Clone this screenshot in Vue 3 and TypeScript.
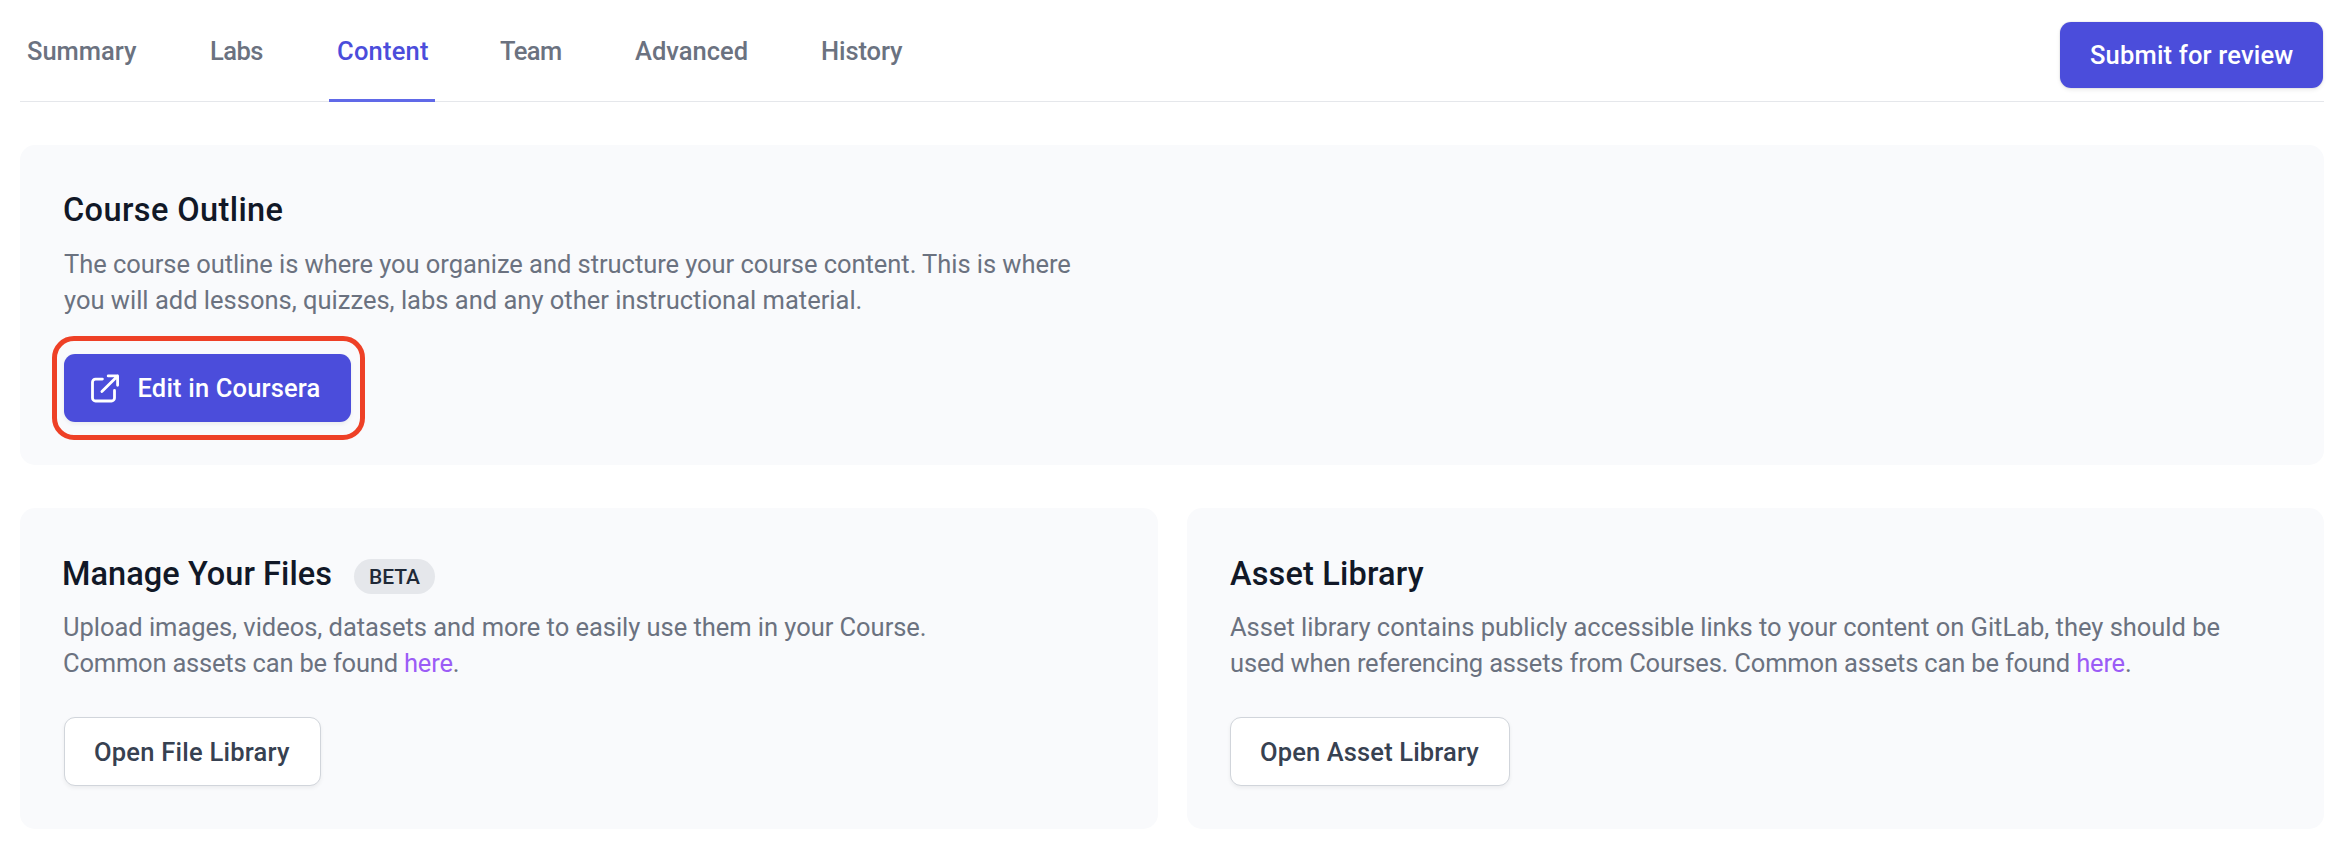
<script setup lang="ts">
interface Tab {
  name: string
  active?: boolean
}

interface Library {
  key: string
  title: string
  beta?: boolean
  lines: string[]
  action: string
}

const tabs: Tab[] = [
  { name: 'Summary' },
  { name: 'Labs' },
  { name: 'Content', active: true },
  { name: 'Team' },
  { name: 'Advanced' },
  { name: 'History' },
]

const libraries: Library[] = [
  {
    key: 'files',
    title: 'Manage Your Files',
    beta: true,
    lines: [
      'Upload images, videos, datasets and more to easily use them in your Course.',
      'Common assets can be found ',
    ],
    action: 'Open File Library',
  },
  {
    key: 'assets',
    title: 'Asset Library',
    lines: [
      'Asset library contains publicly accessible links to your content on GitLab, they should be',
      'used when referencing assets from Courses. Common assets can be found ',
    ],
    action: 'Open Asset Library',
  },
]
</script>

<template>
  <main class="page">
    <header class="topbar">
      <nav class="tabs">
        <a
          v-for="tab in tabs"
          :key="tab.name"
          class="tab"
          :class="[tab.name.toLowerCase(), { active: tab.active }]"
        ><span>{{ tab.name }}</span></a>
      </nav>
      <button class="btn primary submit">Submit for review</button>
    </header>

    <section class="card outline">
      <h2>Course Outline</h2>
      <p>
        <span class="line first">The course outline is where you organize and structure your course content. This is where</span>
        <span class="line">you will add lessons, quizzes, labs and any other instructional material.</span>
      </p>
      <div class="highlight">
        <button class="btn primary edit">
          <svg class="icon" viewBox="0 0 30 30" fill="none" stroke="currentColor" stroke-width="2.8" stroke-linecap="round" stroke-linejoin="round">
            <path d="M12.4 6.1H5.5a3 3 0 0 0-3 3V25a3 3 0 0 0 3 3H21.500a3 3 0 0 0 3-3v-7.500" />
            <path d="M18.200 2.900h9.400v9.400M27.600 2.900L11.900 18.500" />
          </svg>
          <span>Edit in Coursera</span>
        </button>
      </div>
    </section>

    <div class="libraries">
      <section v-for="lib in libraries" :key="lib.key" class="card" :class="lib.key">
        <h2><span>{{ lib.title }}</span><span v-if="lib.beta" class="badge">BETA</span></h2>
        <p>
          <span class="line first">{{ lib.lines[0] }}</span>
          <span class="line second">{{ lib.lines[1] }}<a class="link">here</a>.</span>
        </p>
        <button class="btn secondary">{{ lib.action }}</button>
      </section>
    </div>
  </main>
</template>

<style>
body {
  margin: 0;
  background: #fff;
}
</style>

<style scoped>
.page {
  box-sizing: border-box;
  min-height: 856px;
  padding: 0 20px;
  font-family: Roboto, "Liberation Sans", sans-serif;
  font-size: 25.5px;
  line-height: 36px;
  color: #6b7280;
}

.topbar {
  display: flex;
  justify-content: space-between;
  align-items: flex-start;
  box-sizing: border-box;
  height: 102px;
  padding-right: 1px;
  border-bottom: 1px solid #e5e7eb;
}

.tabs {
  display: flex;
  gap: 57px;
}

.tab {
  box-sizing: border-box;
  height: 102px;
  padding: 33px 0 0 7px;
  font-weight: 500;
  white-space: nowrap;
  border-bottom: 3px solid transparent;
}

.tab.active {
  color: #4b4ddb;
  border-bottom-color: #6069e8;
}

.summary { width: 126px; }
.labs { width: 69px; letter-spacing: -0.5px; }
.content { width: 106px; padding-left: 8px; letter-spacing: 0.23px; }
.team { width: 79px; padding-left: 8px; letter-spacing: -0.6px; }
.advanced { width: 129px; }
.history { width: 96px; letter-spacing: -0.1px; }

.btn {
  display: inline-flex;
  align-items: center;
  box-sizing: border-box;
  margin: 0;
  border: 0;
  border-radius: 11px;
  font: inherit;
  font-weight: 500;
  white-space: nowrap;
}

.primary {
  color: #fff;
  background: #4b4ddb;
  box-shadow: 0 2px 4px rgba(0, 0, 0, 0.06);
}

.submit {
  width: 263px;
  height: 66px;
  margin-top: 22px;
  padding: 0 0 0 30px;
  letter-spacing: 0.18px;
  box-shadow: 0 0 0 1px rgba(0, 0, 0, 0.04), 0 2px 4px rgba(0, 0, 0, 0.08);
}

.card {
  box-sizing: border-box;
  padding: 44px 44px 0;
  border-radius: 15px;
  background: #f9fafc;
}

.outline {
  height: 320px;
  margin-top: 43px;
}

h2 {
  display: flex;
  align-items: center;
  height: 42px;
  margin: 0;
  font-size: 32.5px;
  font-weight: 500;
  line-height: 42px;
  color: #111827;
}

.outline h2 { margin-left: -1px; letter-spacing: 0.4px; }
.files h2 { margin-left: -2px; letter-spacing: 0.06px; }
.assets h2 { letter-spacing: 0.17px; }

p {
  margin: 15px 0 0;
}

.line {
  display: block;
  white-space: nowrap;
}

.outline .first { letter-spacing: -0.05px; }
.files .first { margin-left: -1px; letter-spacing: -0.04px; }
.files .second { margin-left: -1px; letter-spacing: -0.2px; }
.assets .first { letter-spacing: -0.02px; }
.assets .second { letter-spacing: -0.17px; }

.link {
  color: #9b5cf6;
}

.highlight {
  box-sizing: border-box;
  width: 313px;
  height: 104px;
  margin: 18px 0 0 -12px;
  padding: 13px 0 0 7px;
  border: 5px solid #ee4026;
  border-radius: 22px;
}

.edit {
  width: 287px;
  height: 68px;
  padding: 0 0 0 26px;
  letter-spacing: 0.17px;
}

.icon {
  width: 30px;
  height: 30px;
  margin-right: 17.5px;
}

.libraries {
  display: grid;
  grid-template-columns: 1138px 1137px;
  justify-content: space-between;
  margin-top: 43px;
}

.libraries .card {
  height: 321px;
  padding-top: 45px;
}

.libraries p {
  margin-top: 14px;
}

.libraries .assets {
  padding-left: 43px;
}

.badge {
  box-sizing: border-box;
  width: 81px;
  height: 35px;
  margin: 5px 0 0 22px;
  border-radius: 18px;
  font-size: 21px;
  line-height: 36px;
  text-align: center;
  letter-spacing: 0;
  color: #1f2937;
  background: #e5e7eb;
}

.secondary {
  height: 69px;
  margin-top: 36px;
  padding: 0 0 0 29px;
  border: 1px solid #d1d5db;
  color: #374151;
  background: #fff;
  box-shadow: 0 2px 4px rgba(0, 0, 0, 0.06);
}

.files .secondary { width: 257px; letter-spacing: 0.23px; }
.assets .secondary { width: 280px; letter-spacing: 0.14px; }
</style>
